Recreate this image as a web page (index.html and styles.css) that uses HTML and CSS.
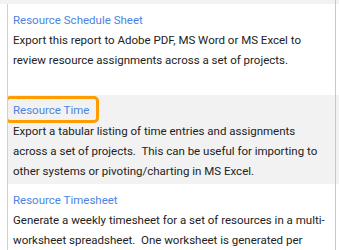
FILE: index.html
```html
<!DOCTYPE html>
<html>
<head>
<meta charset="utf-8">
<link rel="stylesheet" href="styles.css">
</head>
<body>
<div class="topbar"></div>
<div class="list">
  <div class="item">
    <a class="title">Resource Schedule Sheet</a>
    <p class="desc">Export this report to Adobe PDF, MS Word or MS Excel to review resource assignments across a set of projects.</p>
  </div>
  <div class="item alt">
    <span class="highlight"></span>
    <a class="title">Resource Time</a>
    <p class="desc">Export a tabular listing of time entries and assignments across a set of projects.&nbsp; This can be useful for importing to other systems or pivoting/charting in MS Excel.</p>
  </div>
  <div class="item">
    <a class="title">Resource Timesheet</a>
    <p class="desc">Generate a weekly timesheet for a set of resources in a multi-worksheet spreadsheet.&nbsp; One worksheet is generated per resource.</p>
  </div>
</div>
<div class="rightline"></div>
</body>
</html>
```
FILE: styles.css
```css
html, body {
  margin: 0;
  padding: 0;
  background: #fff;
  overflow: hidden;
  height: 250px;
}
body {
  font-family: Roboto, "Open Sans", sans-serif;
  font-size: 11.5px;
  line-height: 20px;
  color: #222;
  position: relative;
}
.topbar {
  height: 4px;
  background: #f2f2f2;
}
.list {
  margin-left: 7px;
  border-left: 1px solid #d0d0d0;
  height: 246px;
  overflow: hidden;
}
.item {
  position: relative;
  box-sizing: border-box;
  min-height: 91px;
  padding: 6px 8px 3px 5px;
}
.item.alt {
  background: #f2f2f2;
  min-height: 89px;
  padding-top: 5px;
}
.title {
  display: block;
  color: #4a84e4;
  line-height: 20px;
}
.desc {
  margin: 0;
}
.alt .desc {
  margin-top: 1px;
}
.highlight {
  position: absolute;
  left: -3px;
  top: 1px;
  width: 88px;
  height: 21px;
  border: 3px solid #ff9c00;
  border-radius: 5px;
}
.rightline {
  position: absolute;
  top: 0;
  left: 335px;
  width: 1px;
  height: 250px;
  background: #c8c8c8;
}
```
